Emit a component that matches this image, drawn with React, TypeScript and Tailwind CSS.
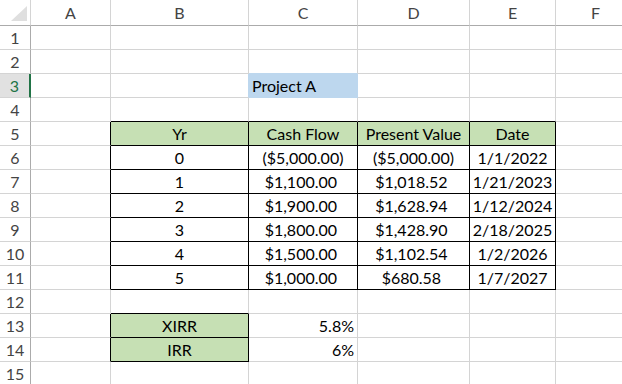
import React from 'react'

const cols = ['A', 'B', 'C', 'D', 'E', 'F']
const rows = Array.from({ length: 15 }, (_, i) => i + 1)

type CellData = { text: string; align?: 'left' | 'center' | 'right'; money?: boolean }

// cell contents keyed by address
const data: Record<string, CellData> = {
    C3: { text: 'Project A', align: 'left' },
    B5: { text: 'Yr' },
    C5: { text: 'Cash Flow' },
    D5: { text: 'Present Value' },
    E5: { text: 'Date' },
    B6: { text: '0' }, C6: { text: '($5,000.00)' }, D6: { text: '($5,000.00)' }, E6: { text: '1/1/2022' },
    B7: { text: '1' }, C7: { text: '$1,100.00', money: true }, D7: { text: '$1,018.52', money: true }, E7: { text: '1/21/2023' },
    B8: { text: '2' }, C8: { text: '$1,900.00', money: true }, D8: { text: '$1,628.94', money: true }, E8: { text: '1/12/2024' },
    B9: { text: '3' }, C9: { text: '$1,800.00', money: true }, D9: { text: '$1,428.90', money: true }, E9: { text: '2/18/2025' },
    B10: { text: '4' }, C10: { text: '$1,500.00', money: true }, D10: { text: '$1,102.54', money: true }, E10: { text: '1/2/2026' },
    B11: { text: '5' }, C11: { text: '$1,000.00', money: true }, D11: { text: '$680.58', money: true }, E11: { text: '1/7/2027' },
    B13: { text: 'XIRR' }, C13: { text: '5.8%', align: 'right' },
    B14: { text: 'IRR' }, C14: { text: '6%', align: 'right' },
}

type Fill = 'green' | 'blue'
const fills: Record<string, Fill> = {
    C3: 'blue',
    B5: 'green', C5: 'green', D5: 'green', E5: 'green',
    B13: 'green', B14: 'green',
}

const bgClass = { green: 'bg-[#c6e0b4]', blue: 'bg-[#bdd7ee]' }
const rightClass = {
    black: 'border-r-black',
    green: 'border-r-[#c6e0b4]',
    blue: 'border-r-[#bdd7ee]',
    grid: 'border-r-[#d4d4d4]',
}
const bottomClass = {
    black: 'border-b-black',
    green: 'border-b-[#c6e0b4]',
    blue: 'border-b-[#bdd7ee]',
    grid: 'border-b-[#d4d4d4]',
}
const alignClass = { left: 'justify-start pl-[3px]', center: 'justify-center', right: 'justify-end pr-[3px]' }

const addr = (r: number, c: number) => (c >= 1 && c <= 6 ? cols[c - 1] + r : '')

const bordered = (r: number, c: number) =>
    (r >= 5 && r <= 11 && c >= 2 && c <= 5) || (r >= 13 && r <= 14 && c === 2)

function edge(r: number, c: number, r2: number, c2: number): keyof typeof rightClass {
    if (bordered(r, c) || bordered(r2, c2)) return 'black'
    return fills[addr(r, c)] || fills[addr(r2, c2)] || 'grid'
}

function Cell({ r, c }: { r: number; c: number }) {
    const a = addr(r, c)
    const cell = data[a]
    const fill = fills[a]
    return (
        <div
            className={`flex items-center border-r border-b leading-[23px] text-black whitespace-nowrap overflow-visible ${
                rightClass[edge(r, c, r, c + 1)]
            } ${bottomClass[edge(r, c, r + 1, c)]} ${fill ? bgClass[fill] : ''} ${alignClass[cell?.align || 'center']}`}
        >
            {cell && (
                <span>
                    {cell.text}
                    {cell.money && <span className="invisible">)</span>}
                </span>
            )}
        </div>
    )
}

export default function App() {
    return (
        <div
            className="w-[622px] h-[384px] overflow-hidden bg-white text-[16px]"
            style={{ fontFamily: 'Lato, "Open Sans", sans-serif' }}
        >
            <div className="grid grid-cols-[31px_80px_138px_109px_112px_86px_80px] grid-rows-[26px_repeat(15,24px)]">
                {/* corner */}
                <div className="border-r border-b border-r-[#d4d4d4] border-b-[#ababab]">
                    <svg width="30" height="25" viewBox="0 0 30 25">
                        <polygon points="11,21 27,21 27,6" fill="#dfdfdf" />
                    </svg>
                </div>
                {cols.map((col) => (
                    <div
                        key={col}
                        className="flex items-center justify-center border-r border-b border-r-[#d4d4d4] border-b-[#ababab] leading-[25px] text-[#444]"
                    >
                        {col}
                    </div>
                ))}

                {rows.map((r) => (
                    <React.Fragment key={r}>
                        {r === 3 ? (
                            <div className="flex items-center justify-center border-r-2 border-b border-r-[#217346] border-b-[#d4d4d4] bg-[#e1e1e1] leading-[23px] text-[#217346]">
                                {r}
                            </div>
                        ) : (
                            <div className="flex items-center justify-center border-r border-b border-r-[#ababab] border-b-[#d4d4d4] leading-[23px] text-[#444]">
                                {r}
                            </div>
                        )}
                        {cols.map((_, i) => (
                            <Cell key={i} r={r} c={i + 1} />
                        ))}
                    </React.Fragment>
                ))}
            </div>
        </div>
    )
}
